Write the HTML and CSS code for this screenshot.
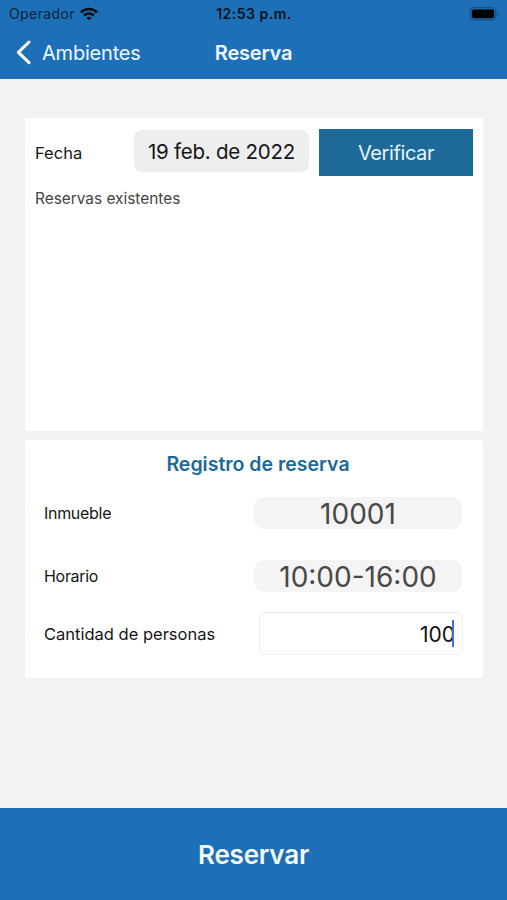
FILE: index.html
```html
<!DOCTYPE html>
<html lang="es">
<head>
    <meta charset="UTF-8">
    <meta name="viewport" content="width=device-width, initial-scale=1.0">
    <title>Reserva</title>
    <link rel="stylesheet" href="styles.css">
</head>
<body>

    <!-- Header -->
    <header class="top">
        <div class="status-bar">
            <div class="carrier">
                <span>Operador</span>
                <svg class="wifi" width="18" height="14" viewBox="0 0 18 14" fill="none" stroke="#030a12" stroke-width="2.5">
                    <path d="M1 5.3C5.5 .9 12.5 .9 17 5.3"/>
                    <path d="M4 8.5C6.8 5.8 11.2 5.8 14 8.5"/>
                    <path d="M9 13.3L6.4 10.7C7.9 9.4 10.1 9.4 11.6 10.7Z" fill="#030a12" stroke="none"/>
                </svg>
            </div>
            <span class="clock">12:53 p.m.</span>
            <svg class="battery" width="30" height="14" viewBox="0 0 30 14">
                <rect x="1.2" y=".7" width="25.6" height="12.2" rx="3.8" fill="none" stroke="#15507f" stroke-width="1.2"/>
                <rect x="2.8" y="2.4" width="22.4" height="8.8" rx="2.2" fill="#000"/>
                <path d="M28.1 4.9C29.9 5.5 29.9 8.2 28.1 8.8Z" fill="#15507f"/>
            </svg>
        </div>
        <nav class="nav-bar">
            <a class="back">
                <svg width="15" height="25" viewBox="0 0 15 25" fill="none" stroke="#fff" stroke-width="3" stroke-linecap="round" stroke-linejoin="round">
                    <path d="M13 2L2.4 12.3L13 22.6"/>
                </svg>
                <span>Ambientes</span>
            </a>
            <h1>Reserva</h1>
        </nav>
    </header>

    <main>
        <!-- Existing reservations -->
        <section class="card availability">
            <div class="date-row">
                <span class="label">Fecha</span>
                <span class="date">19 feb. de 2022</span>
                <button class="verify">Verificar</button>
            </div>
            <p class="existing">Reservas existentes</p>
        </section>

        <!-- Reservation form -->
        <section class="card register">
            <h2>Registro de reserva</h2>
            <div class="row property">
                <span class="label">Inmueble</span>
                <span class="pill">10001</span>
            </div>
            <div class="row schedule">
                <span class="label">Horario</span>
                <span class="pill">10:00-16:00</span>
            </div>
            <div class="row people">
                <span class="label">Cantidad de personas</span>
                <div class="field"><span>100</span><i class="caret"></i></div>
            </div>
        </section>
    </main>

    <footer class="reserve">Reservar</footer>

</body>
</html>
```
FILE: styles.css
```css
* {
    box-sizing: border-box;
}

body {
    display: flex;
    flex-direction: column;
    height: 900px;
    margin: 0;
    font-family: Inter, 'Liberation Sans', sans-serif;
    background-color: #f2f2f5;
    color: #151515;
}

h1, h2, p {
    margin: 0;
}

/* Header */
.top {
    height: 79px;
    background-color: #1d70b7;
}

.status-bar {
    display: grid;
    grid-template-columns: 1fr auto 1fr;
    align-items: center;
    height: 27px;
    padding: 0 8px 0 9px;
    font-size: 14px;
    letter-spacing: 0.4px;
    color: #08233b;
}

.carrier {
    display: flex;
    align-items: center;
    gap: 5px;
}

.clock {
    font-weight: 600;
    letter-spacing: 0.5px;
    color: #061421;
}

.battery {
    justify-self: end;
}

.nav-bar {
    display: grid;
    grid-template-columns: 1fr auto 1fr;
    align-items: center;
    height: 51px;
    padding: 0 16px;
    color: #f0f8ff;
}

.back {
    display: flex;
    align-items: center;
    gap: 11px;
    font-size: 20px;
    letter-spacing: -0.2px;
}

h1 {
    font-size: 20px;
    font-weight: 600;
    letter-spacing: -0.2px;
}

/* Cards */
main {
    display: flex;
    flex: 1;
    flex-direction: column;
    gap: 9px;
    padding: 39px 24px 0 25px;
}

.card {
    background-color: #fff;
    border-radius: 2px;
}

.label {
    font-size: 16px;
}

.availability {
    height: 313px;
    padding: 11px 10px 0;
}

.date-row {
    display: flex;
    align-items: center;
    height: 47px;
}

.date-row .label {
    width: 99px;
    font-size: 16.5px;
}

.date {
    width: 175px;
    height: 42px;
    margin: -4px 10px 0 0;
    border-radius: 8px;
    background-color: #eeeeef;
    font-size: 20.5px;
    letter-spacing: -0.25px;
    line-height: 44px;
    text-align: center;
}

.verify {
    width: 154px;
    height: 47px;
    padding: 0;
    border: none;
    background-color: #1d6998;
    color: #e8f6ff;
    font-family: inherit;
    font-size: 20px;
    letter-spacing: -0.4px;
}

.existing {
    margin-top: 13px;
    font-size: 15.4px;
    line-height: 19px;
    color: #444;
}

/* Form */
.register {
    height: 238px;
    padding: 11px 20px 0 19px;
}

h2 {
    padding-left: 9px;
    color: #1d6998;
    font-size: 19.5px;
    font-weight: 600;
    line-height: 27px;
    text-align: center;
}

.row {
    display: flex;
    align-items: center;
    justify-content: space-between;
    height: 32px;
}

.property {
    margin-top: 19px;
}

.property .label,
.schedule .label {
    letter-spacing: -0.3px;
}

.schedule {
    margin-top: 31px;
}

.pill {
    width: 208px;
    height: 32px;
    margin-right: 1px;
    border-radius: 11px;
    background-color: #f4f4f4;
    color: #484848;
    font-size: 28px;
    line-height: 34px;
    text-align: center;
}

.people {
    height: 43px;
    margin-top: 20px;
}

.people .label {
    font-size: 16.5px;
}

.field {
    display: flex;
    align-items: center;
    justify-content: flex-end;
    width: 204px;
    height: 43px;
    padding-right: 8px;
    border: 1px solid #eeeef0;
    border-radius: 6px;
    color: #111;
    font-size: 21px;
}

.field span {
    padding-top: 2px;
}

.caret {
    width: 2px;
    height: 27px;
    margin-left: -3px;
    background-color: #416be8;
}

/* Footer */
.reserve {
    height: 92px;
    background-color: #1d70b7;
    color: #f4fbff;
    font-size: 26px;
    font-weight: 600;
    letter-spacing: -0.2px;
    line-height: 94px;
    text-align: center;
}
```
